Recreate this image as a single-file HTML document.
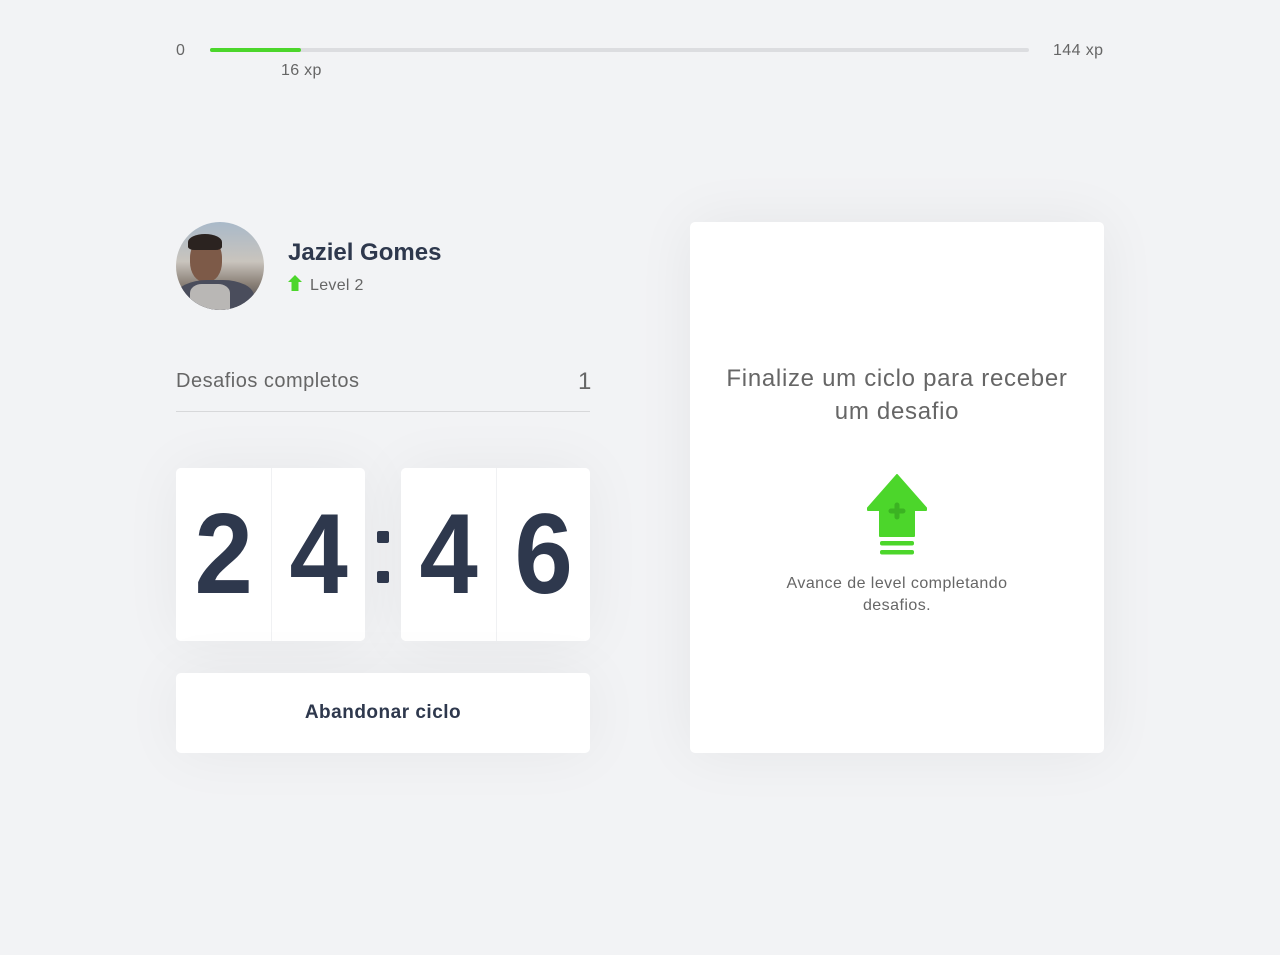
<!DOCTYPE html>
<html><head><meta charset="utf-8"><style>
*{margin:0;padding:0;box-sizing:border-box}
body{width:1280px;height:955px;background:#f2f3f5;font-family:"Liberation Sans",sans-serif;color:#666;position:relative;overflow:hidden}
.a{position:absolute}
.card{background:#fff;border-radius:5px;box-shadow:0 0 60px rgba(0,0,0,0.05)}
.d{position:absolute;top:468px;height:173px;width:95px;background:#fff;text-align:center;font-size:114px;line-height:173px;color:#2e384d;font-weight:bold}
.d span{display:inline-block;transform:scaleX(0.92)}
</style></head><body>
<div class="a" style="left:176px;top:42px;font-size:16px">0</div>
<div class="a" style="left:210px;top:48px;width:819px;height:4px;border-radius:4px;background:#dcdde0"></div>
<div class="a" style="left:210px;top:48px;width:91px;height:4px;border-radius:4px;background:#4cd62b"></div>
<div class="a" style="left:281px;top:62px;font-size:16px;letter-spacing:0.3px">16 xp</div>
<div class="a" style="left:1053px;top:42px;font-size:16px;letter-spacing:0.4px">144 xp</div>

<div class="a" style="left:176px;top:222px;width:88px;height:88px;border-radius:50%;overflow:hidden;background:linear-gradient(180deg,#a9b9c9 0%,#c9c4bd 45%,#8b8178 70%,#3a3a45 100%)">
<div class="a" style="left:14px;top:16px;width:32px;height:44px;border-radius:45%;background:#7d5a48"></div>
<div class="a" style="left:12px;top:12px;width:34px;height:16px;border-radius:50% 50% 20% 20%;background:#2b2320"></div>
<div class="a" style="left:0;top:58px;width:78px;height:40px;border-radius:40% 40% 0 0;background:#4a4d5c"></div>
<div class="a" style="left:14px;top:62px;width:40px;height:30px;background:#b9b7b5;border-radius:30% 30% 0 0"></div>
</div>
<div class="a" style="left:288px;top:239px;font-size:24px;font-weight:bold;color:#2e384d">Jaziel Gomes</div>
<svg class="a" style="left:288px;top:275px" width="14" height="16" viewBox="0 0 14 16"><path d="M7 0 L14 7 H10.5 V16 H3.5 V7 H0 Z" fill="#4cd62b"/></svg>
<div class="a" style="left:310px;top:277px;font-size:16px;letter-spacing:0.3px">Level 2</div>

<div class="a" style="left:176px;top:370px;font-size:20px;letter-spacing:0.5px">Desafios completos</div>
<div class="a" style="left:578px;top:368px;font-size:24px">1</div>
<div class="a" style="left:176px;top:411px;width:414px;height:1px;background:#d7d8da"></div>

<div class="a card" style="left:176px;top:468px;width:189px;height:173px"></div>
<div class="a card" style="left:401px;top:468px;width:189px;height:173px"></div>
<div class="d" style="left:176px;border-radius:5px 0 0 5px"><span>2</span></div>
<div class="d" style="left:272px;width:93px;border-radius:0 5px 5px 0"><span>4</span></div>
<div class="a" style="left:271px;top:468px;width:1px;height:173px;background:#f0f1f3"></div>
<div class="a" style="left:377px;top:531px;width:12px;height:12px;background:#2e384d;border-radius:2px"></div>
<div class="a" style="left:377px;top:571px;width:12px;height:12px;background:#2e384d;border-radius:2px"></div>
<div class="d" style="left:401px;border-radius:5px 0 0 5px"><span>4</span></div>
<div class="d" style="left:497px;width:93px;border-radius:0 5px 5px 0"><span>6</span></div>
<div class="a" style="left:496px;top:468px;width:1px;height:173px;background:#f0f1f3"></div>

<div class="a card" style="left:176px;top:673px;width:414px;height:80px;text-align:center;line-height:80px;font-size:19px;font-weight:bold;color:#2e384d;letter-spacing:0.5px">Abandonar ciclo</div>

<div class="a card" style="left:690px;top:222px;width:414px;height:531px;box-shadow:0 0 60px rgba(0,0,0,0.06)">
<div class="a" style="left:0;top:140px;width:414px;text-align:center;font-size:24px;line-height:33px;letter-spacing:0.7px">Finalize um ciclo para receber<br>um desafio</div>
<svg class="a" style="left:177px;top:252px" width="60" height="82" viewBox="0 0 60 82"><path d="M30 1 L59 34 V36 H47 V62 H13 V36 H1 V34 Z" fill="#4cd62b" stroke="#4cd62b" stroke-width="2" stroke-linejoin="round"/><path d="M30 31 V43 M24 37 H36" stroke="#3bb322" stroke-width="5" stroke-linecap="round"/><rect x="13" y="67" width="34" height="4.5" rx="2" fill="#4cd62b"/><rect x="13" y="76" width="34" height="4.5" rx="2" fill="#4cd62b"/></svg>
<div class="a" style="left:0;top:351px;width:414px;text-align:center;font-size:16px;line-height:22px;letter-spacing:0.45px">Avance de level completando<br>desafios.</div>
</div>
</body></html>
